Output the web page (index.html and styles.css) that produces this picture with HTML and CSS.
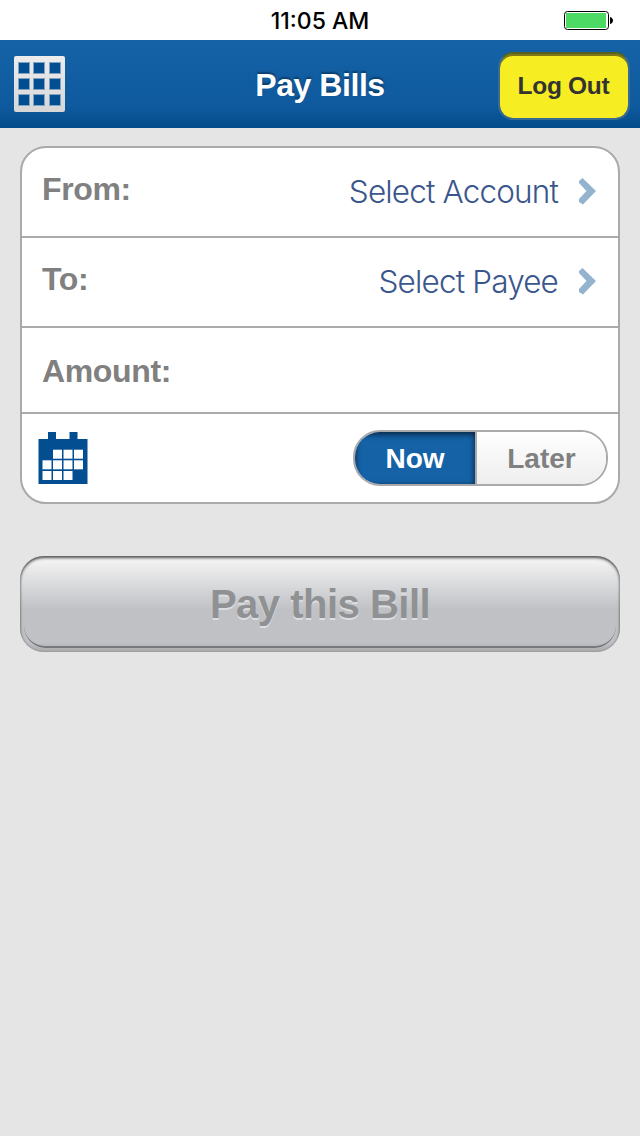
FILE: index.html
```html
<!DOCTYPE html>
<html lang="en">

<head>
    <meta charset="UTF-8">
    <meta name="viewport" content="width=device-width, initial-scale=1.0">
    <title>Pay Bills</title>
    <link rel="stylesheet" href="styles.css">
</head>

<body>
    <div class="status-bar">
        <span class="time">11:05 AM</span>
        <svg class="battery" width="50" height="20" viewBox="0 0 50 20">
            <rect x="0.5" y="0.5" width="44" height="18" rx="3" fill="#fff" stroke="#000" />
            <rect x="2" y="2" width="40" height="15" fill="#4cd964" />
            <path d="M46 6c4 1 4 6 0 7z" fill="#000" />
        </svg>
    </div>

    <header class="header">
        <button class="menu-btn" aria-label="Menu">
            <svg width="51" height="56" viewBox="0 0 51 56">
                <defs>
                    <linearGradient id="plate" x1="0" y1="0" x2="0" y2="1">
                        <stop offset="0" stop-color="#ededed" />
                        <stop offset="1" stop-color="#d6d6d6" />
                    </linearGradient>
                </defs>
                <rect width="51" height="56" rx="2" fill="url(#plate)" />
                <g fill="#034e90" stroke="#7fa3c4">
                    <rect x="4.5" y="6.5" width="11" height="11" />
                    <rect x="19.5" y="6.5" width="11" height="11" />
                    <rect x="35.5" y="6.5" width="11" height="11" />
                    <rect x="4.5" y="22.5" width="11" height="11" />
                    <rect x="19.5" y="22.5" width="11" height="11" />
                    <rect x="35.5" y="22.5" width="11" height="11" />
                    <rect x="4.5" y="38.5" width="11" height="11" />
                    <rect x="19.5" y="38.5" width="11" height="11" />
                    <rect x="35.5" y="38.5" width="11" height="11" />
                </g>
            </svg>
        </button>
        <h1 class="title">Pay Bills</h1>
        <button class="logout-btn">Log Out</button>
    </header>

    <main class="container">
        <div class="card">
            <div class="row">
                <span class="label">From:</span>
                <span class="value">Select Account</span>
                <svg class="arrow" width="17" height="27" viewBox="0 0 17 27">
                    <path d="M0 5V3L3.500 0L17 13L4 26.500L0 24V21L7.500 13Z" fill="#94b3ce" />
                </svg>
            </div>
            <div class="row">
                <span class="label">To:</span>
                <span class="value">Select Payee</span>
                <svg class="arrow" width="17" height="27" viewBox="0 0 17 27">
                    <path d="M0 5V3L3.500 0L17 13L4 26.500L0 24V21L7.500 13Z" fill="#94b3ce" />
                </svg>
            </div>
            <div class="row amount">
                <span class="label">Amount:</span>
            </div>
            <div class="row date">
                <svg class="calendar" width="50" height="52" viewBox="0 0 50 52">
                    <path d="M0.5 7H10V0H18V7H31.5V0H39.5V7H49.5V52H0.5Z" fill="#034e90" />
                    <g fill="#fff">
                        <rect x="15" y="17.7" width="9" height="9" />
                        <rect x="25.5" y="17.7" width="9" height="9" />
                        <rect x="36" y="17.7" width="9" height="9" />
                        <rect x="4.5" y="28.3" width="9" height="9" />
                        <rect x="15" y="28.3" width="9" height="9" />
                        <rect x="25.5" y="28.3" width="9" height="9" />
                        <rect x="36" y="28.3" width="9" height="9" />
                        <rect x="4.5" y="39" width="9" height="9" />
                        <rect x="15" y="39" width="9" height="9" />
                        <rect x="25.5" y="39" width="9" height="9" />
                    </g>
                </svg>
                <div class="toggle">
                    <button class="now">Now</button>
                    <button class="later">Later</button>
                </div>
            </div>
        </div>

        <button class="pay-btn"><span class="pay-face">Pay this Bill</span></button>
    </main>
</body>

</html>
```

FILE: styles.css
```css
* {
    margin: 0;
    padding: 0;
    box-sizing: border-box;
}

body {
    background-color: #e5e5e5;
    min-height: 100vh;
    font-family: "Liberation Sans", Arial, sans-serif;
}

button {
    border: none;
    background: none;
    font-family: inherit;
    font-weight: 700;
}

svg {
    display: block;
}

.status-bar {
    display: grid;
    grid-template-columns: 1fr auto 1fr;
    align-items: center;
    height: 40px;
    padding: 1px 26px 0;
    background-color: #fff;
}

.time {
    grid-column: 2;
    font-family: Inter, sans-serif;
    font-size: 23px;
    font-weight: 500;
    color: #000;
}

.battery {
    justify-self: end;
    margin-top: 1px;
}

.header {
    display: grid;
    grid-template-columns: 1fr auto 1fr;
    align-items: center;
    height: 88px;
    padding: 0 10px 0 14px;
    background: linear-gradient(#1562a7, #0f5a9e 75%, #044c8b);
}

.menu-btn {
    justify-self: start;
}

.title {
    padding: 1px 4px 0 0;
    font-size: 32px;
    line-height: 36px;
    letter-spacing: -0.45px;
    color: #fff;
    text-shadow: 0 -2px 2px rgba(0, 0, 0, 0.35);
}

.logout-btn {
    justify-self: end;
    width: 132px;
    height: 68px;
    margin-top: 4px;
    padding-right: 1px;
    border: 2px solid #3a6c93;
    border-top-color: #59631f;
    border-radius: 15px;
    background-color: #f6ed22;
    background-clip: padding-box;
    box-shadow: inset 0 2px 0 #7d7814;
    font-size: 24.5px;
    letter-spacing: -0.3px;
    color: #333;
}

.container {
    display: flex;
    flex-direction: column;
    gap: 52px;
    padding: 18px 20px;
}

.card {
    border: 2px solid #aaa;
    border-radius: 26px;
    background-color: #fff;
}

.row {
    display: flex;
    align-items: center;
    height: 90px;
    padding: 0 22px 2px 20px;
    border-bottom: 2px solid #aaa;
}

.row.amount {
    height: 86px;
}

.row.date {
    height: 88px;
    padding: 0 10px 0 16px;
    border-bottom: none;
    justify-content: space-between;
}

.label {
    flex: 1;
    padding-bottom: 4px;
    font-size: 32px;
    line-height: 36px;
    font-weight: 700;
    letter-spacing: -0.35px;
    color: #808080;
}

.amount .label {
    padding: 4px 0 0;
}

.value {
    padding-top: 2px;
    font-family: Inter, sans-serif;
    font-size: 31.5px;
    font-weight: 300;
    line-height: 38px;
    letter-spacing: -0.85px;
    color: #3a568c;
}

.arrow {
    margin-left: 21px;
}

.toggle {
    display: flex;
    width: 255px;
    height: 56px;
    border: 2px solid #aaa;
    border-radius: 27px;
    overflow: hidden;
}

.toggle button {
    padding-top: 2px;
    font-size: 28px;
}

.now {
    width: 122px;
    border-right: 2px solid #aaa;
    background-color: #1562a7;
    box-shadow: inset 0 2px 6px rgba(0, 0, 0, 0.7);
    color: #fff;
}

.later {
    flex: 1;
    background: linear-gradient(#fff, #eee);
    color: #808080;
}

.pay-btn {
    display: flex;
    height: 96px;
    padding: 0 4px 4px;
    border-radius: 24px;
    background: linear-gradient(#f2f2f2 5%, #bfc1c5 56%, #c0c1c5 90%, #aaa);
    box-shadow: inset 0 2px 3px #555, inset 0 0 2px #888;
}

.pay-face {
    flex: 1;
    border-bottom: 2px solid #77787b;
    border-radius: 22px;
    font-size: 40px;
    line-height: 96px;
    letter-spacing: -0.5px;
    color: #909193;
    text-shadow: 0 2px 0 #dcdde0;
}
```
